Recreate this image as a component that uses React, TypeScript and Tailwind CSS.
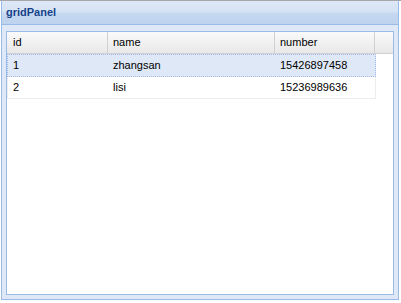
import React from 'react';

const rows = [
  { id: '1', name: 'zhangsan', number: '15426897458' },
  { id: '2', name: 'lisi', number: '15236989636' },
];

export default function App() {
  return (
    <div className="w-[401px] h-[303px] bg-white font-['Liberation_Sans',Arial,sans-serif] text-[11px] text-black">
      <div className="h-px bg-[#a8a8a8]" />
      <div className="ml-px w-[398px] h-[299px] flex flex-col border-x border-b border-[#99bbe8] bg-[#dfe8f6]">
        {/* panel header */}
        <div className="h-[24px] shrink-0 flex items-center pl-[4px] border-b border-[#99bbe8] bg-[linear-gradient(to_bottom,#dde8f6_0%,#d6e3f4_45%,#c6d8f0_55%,#bfd3ee_100%)]">
          <span className="font-bold text-[#15428b] leading-none">gridPanel</span>
        </div>
        {/* panel body */}
        <div className="flex-1 flex flex-col px-[4px] pt-[6px] pb-[4px]">
          <div className="flex-1 flex flex-col border border-[#99bbe8] bg-white">
            {/* grid header */}
            <div className="h-[22px] shrink-0 flex border-b border-[#d0d0d0] bg-[linear-gradient(to_bottom,#fafafa,#e8e8e8)]">
              <div className="w-[101px] flex items-center pl-[6px] border-r border-[#d0d0d0]">id</div>
              <div className="w-[167px] flex items-center pl-[5px] border-r border-[#d0d0d0]">name</div>
              <div className="w-[100px] flex items-center pl-[5px] border-r border-[#d0d0d0]">number</div>
              <div className="flex-1" />
            </div>
            {/* grid rows */}
            <div className="flex flex-col">
              {rows.map((r, i) => (
                <div
                  key={r.id}
                  className={`w-[369px] flex ${
                    i === 0
                      ? 'h-[23px] border border-dotted border-[#a3bae9] bg-[#dfe8f6]'
                      : 'h-[22px] border-x border-b border-[#ededed]'
                  }`}
                >
                  <div className="w-[100px] flex items-center pl-[5px]">{r.id}</div>
                  <div className="w-[167px] flex items-center pl-[5px]">{r.name}</div>
                  <div className="w-[100px] flex items-center pl-[5px]">{r.number}</div>
                </div>
              ))}
            </div>
          </div>
        </div>
      </div>
    </div>
  );
}
